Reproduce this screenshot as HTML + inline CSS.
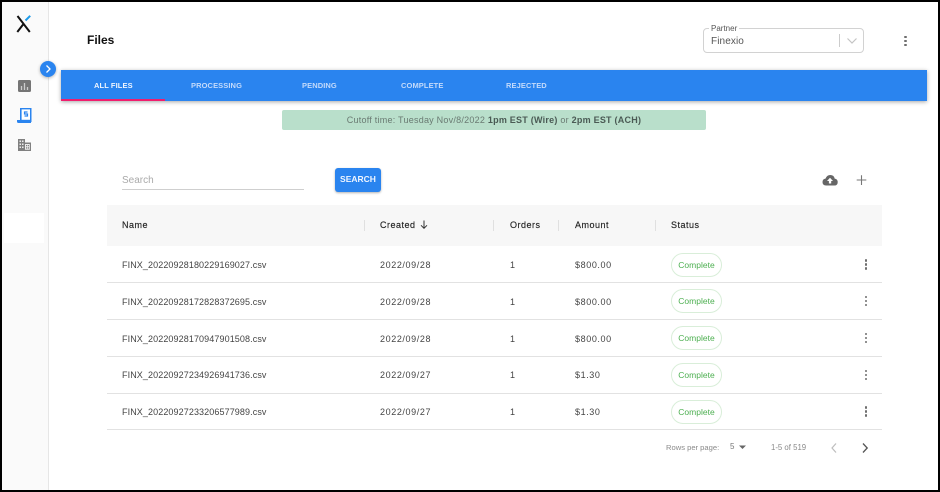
<!DOCTYPE html>
<html><head><meta charset="utf-8">
<style>
*{box-sizing:border-box;margin:0;padding:0}
html,body{width:940px;height:492px;overflow:hidden;background:#000}
body{position:relative;font-family:"Liberation Sans",sans-serif}
#page{position:absolute;left:2px;top:2px;width:935.500px;height:488px;background:#fff;overflow:hidden}
.a{position:absolute;white-space:nowrap}
#root{position:absolute;left:2px;top:2px;width:935.500px;height:488px;overflow:hidden}
#in{position:absolute;left:-2px;top:-2px;width:940px;height:492px;filter:blur(.3px)}
.tab{position:absolute;top:81px;font-size:7.500px;line-height:10px;font-weight:700;color:#c3dafb;letter-spacing:.1px}
.th{position:absolute;top:220px;font-size:9px;line-height:11px;color:#222;letter-spacing:.5px;-webkit-text-stroke:.15px #222}
.td{position:absolute;font-size:9px;line-height:11px;color:#444;letter-spacing:.1px}
.w{letter-spacing:.6px}
.sep{position:absolute;top:220px;width:1px;height:11px;background:#e0e0e0}
.line{position:absolute;left:107px;width:775px;height:1px;background:#e2e2e2}
.chip{position:absolute;left:671px;width:51px;height:24px;border:1px solid #d9eed9;border-radius:12px;font-size:8.500px;line-height:22px;text-align:center;color:#4caf50;background:#fff}
.dots{position:absolute;left:864.500px;width:3px}
.dots i{display:block;width:2.600px;height:2.600px;border-radius:50%;background:#6e6e6e;margin-bottom:1.600px}
</style></head><body>
<div id="page"></div>
<div id="root"><div id="in">
<!-- sidebar -->
<div class="a" style="left:2px;top:2px;width:47px;height:488px;background:#fafafa;border-right:1px solid #e6e6e6"></div>
<div class="a" style="left:4px;top:213px;width:40px;height:30px;background:#fff"></div>
<svg class="a" style="left:16px;top:14px" width="16" height="19" viewBox="0 0 16 19"><path d="M1.500 2 L13.800 18 M1.300 18 L7 10.600" stroke="#111" stroke-width="2" fill="none"/><path d="M9.500 6.500 L14.200 1.800" stroke="#1e9be8" stroke-width="2" fill="none"/></svg>
<svg class="a" style="left:18px;top:80px" width="13" height="12" viewBox="0 0 13 12"><rect width="13" height="12" rx="1.500" fill="#757575"/><path d="M3.500 10V6M6.500 10V3M9.500 10V7" stroke="#ccc" stroke-width="1.300"/></svg>
<svg class="a" style="left:17px;top:107px" width="15" height="16" viewBox="0 0 15 16"><path d="M3 1h11.500v14H3z" fill="#2a84ef"/><rect x="4.600" y="2.400" width="8.400" height="10.400" fill="#fff"/><path d="M0 13h11v1.500h3V16H1.500Q0 16 0 14.500z" fill="#2a84ef"/><path d="M10.500 5H7.500v2h3v2H7.500" stroke="#2a84ef" stroke-width="1.200" fill="none"/></svg>
<svg class="a" style="left:18px;top:139px" width="13" height="12" viewBox="0 0 13 12"><path d="M0 0h7v3.500h6V12H0z" fill="#808080"/><path d="M1.500 1.500h1.500v1.500h-1.500zM4 1.500h1.500v1.500H4zM1.500 4.500h1.500v1.500h-1.500zM4 4.500h1.500v1.500H4zM1.500 7.500h1.500v1.500h-1.500zM4 7.500h1.500v1.500H4zM7 5h4.800v5.800H7z" fill="#eee"/><path d="M8 6h1.300v1.300H8zM10 6h1v1.300h-1zM8 8.300h1.300v1.300H8zM10 8.300h1v1.300h-1z" fill="#808080"/></svg>
<div class="a" style="left:40px;top:61px;width:16px;height:16px;border-radius:50%;background:#2a84ef;box-shadow:0 1px 3px rgba(0,0,0,.3)"></div>
<svg class="a" style="left:40px;top:61px" width="16" height="16" viewBox="0 0 16 16"><path d="M6.500 4.500L10 8L6.500 11.500" stroke="#fff" stroke-width="1.300" fill="none"/></svg>

<!-- header -->
<div class="a" style="left:87px;top:33px;font-size:12px;line-height:14px;font-weight:700;color:#111">Files</div>
<div class="a" style="left:703px;top:28px;width:161px;height:25px;border:1px solid #d2d2d2;border-radius:4px"></div>
<div class="a" style="left:709px;top:24px;background:#fff;padding:0 2px;font-size:8px;line-height:9px;color:#555">Partner</div>
<div class="a" style="left:711px;top:35.500px;font-size:10px;line-height:12px;color:#555;letter-spacing:.1px">Finexio</div>
<div class="a" style="left:839px;top:34px;width:1px;height:13px;background:#ccc"></div>
<svg class="a" style="left:846px;top:37px" width="12" height="8" viewBox="0 0 12 8"><path d="M1.500 1.500L6 6L10.500 1.500" stroke="#c4c4c4" stroke-width="1.200" fill="none"/></svg>
<div class="dots" style="left:904px;top:35.500px"><i></i><i></i><i></i></div>

<!-- tab bar -->
<div class="a" style="left:61px;top:70px;width:866px;height:31px;background:#2a84ef;box-shadow:0 1px 4px rgba(0,0,0,.35)"></div>
<div class="a" style="left:61px;top:99px;width:104px;height:2px;background:#f01e6e"></div>
<div class="tab" style="left:94px;color:#eef4fe">ALL FILES</div>
<div class="tab" style="left:191px">PROCESSING</div>
<div class="tab" style="left:302px">PENDING</div>
<div class="tab" style="left:401px">COMPLETE</div>
<div class="tab" style="left:506px">REJECTED</div>

<!-- cutoff -->
<div class="a" style="left:282px;top:110px;width:424px;height:20px;background:#b9dfcb;border-radius:2px;text-align:center;font-size:9px;line-height:20px;color:#6a7a72;letter-spacing:.24px">Cutoff time: Tuesday Nov/8/2022 <b style="color:#4a5a54">1pm EST (Wire)</b> or <b style="color:#4a5a54">2pm EST (ACH)</b></div>

<!-- toolbar -->
<div class="a" style="left:122px;top:173.500px;font-size:10px;line-height:13px;color:#aaa">Search</div>
<div class="a" style="left:122px;top:189px;width:182px;height:1px;background:#cfcfcf"></div>
<div class="a" style="left:335px;top:168px;width:46px;height:24px;background:#2a84ef;border-radius:3px;box-shadow:0 1px 2px rgba(0,0,0,.3);color:#eef5ff;font-size:8.500px;line-height:23px;font-weight:700;text-align:center">SEARCH</div>
<svg class="a" style="left:822px;top:174px" width="16" height="12" viewBox="0 0 16 12"><path d="M4 11.500Q.5 11.500 .5 8Q.5 5 3.500 4.600Q5 1 8.200 1Q12 1 12.700 4.600Q15.700 5 15.700 8.200Q15.700 11.500 12.500 11.500z" fill="#666"/><path d="M8 3.800L11 7H9.200v2.500H6.900V7H5z" fill="#fff"/></svg>
<svg class="a" style="left:856px;top:174px" width="11" height="12" viewBox="0 0 11 12"><path d="M5.500 1.200V11M.7 6h9.600" stroke="#777" stroke-width="1.100"/></svg>

<!-- table head -->
<div class="a" style="left:107px;top:205px;width:775px;height:41px;background:#f7f7f7"></div>
<div class="th" style="left:122px">Name</div>
<div class="sep" style="left:364px"></div>
<div class="th" style="left:380px">Created</div>
<svg class="a" style="left:419px;top:219px" width="10" height="11" viewBox="0 0 10 11"><path d="M5 1.500V9M2 6.300L5 9.300L8 6.300" stroke="#333" stroke-width="1" fill="none"/></svg>
<div class="sep" style="left:493px"></div>
<div class="th" style="left:510px">Orders</div>
<div class="sep" style="left:558px"></div>
<div class="th" style="left:575px">Amount</div>
<div class="sep" style="left:655px"></div>
<div class="th" style="left:671px">Status</div>

<!-- rows -->
<div class="td" style="left:122px;top:260px">FINX_20220928180229169027.csv</div>
<div class="td w" style="left:380px;top:260px">2022/09/28</div>
<div class="td" style="left:510px;top:260px">1</div>
<div class="td w" style="left:575px;top:260px">$800.00</div>
<div class="chip" style="top:252.500px">Complete</div>
<div class="dots" style="top:259px"><i></i><i></i><i></i></div>
<div class="line" style="top:282px"></div>

<div class="td" style="left:122px;top:296.500px">FINX_20220928172828372695.csv</div>
<div class="td w" style="left:380px;top:296.500px">2022/09/28</div>
<div class="td" style="left:510px;top:296.500px">1</div>
<div class="td w" style="left:575px;top:296.500px">$800.00</div>
<div class="chip" style="top:289px">Complete</div>
<div class="dots" style="top:295.500px"><i></i><i></i><i></i></div>
<div class="line" style="top:319px"></div>

<div class="td" style="left:122px;top:333.500px">FINX_20220928170947901508.csv</div>
<div class="td w" style="left:380px;top:333.500px">2022/09/28</div>
<div class="td" style="left:510px;top:333.500px">1</div>
<div class="td w" style="left:575px;top:333.500px">$800.00</div>
<div class="chip" style="top:326px">Complete</div>
<div class="dots" style="top:332.500px"><i></i><i></i><i></i></div>
<div class="line" style="top:356px"></div>

<div class="td" style="left:122px;top:370px">FINX_20220927234926941736.csv</div>
<div class="td w" style="left:380px;top:370px">2022/09/27</div>
<div class="td" style="left:510px;top:370px">1</div>
<div class="td w" style="left:575px;top:370px">$1.30</div>
<div class="chip" style="top:363px">Complete</div>
<div class="dots" style="top:369.500px"><i></i><i></i><i></i></div>
<div class="line" style="top:393px"></div>

<div class="td" style="left:122px;top:407px">FINX_20220927233206577989.csv</div>
<div class="td w" style="left:380px;top:407px">2022/09/27</div>
<div class="td" style="left:510px;top:407px">1</div>
<div class="td w" style="left:575px;top:407px">$1.30</div>
<div class="chip" style="top:400px">Complete</div>
<div class="dots" style="top:406px"><i></i><i></i><i></i></div>
<div class="line" style="top:429px"></div>

<!-- pagination -->
<div class="a" style="left:666px;top:443px;font-size:7.600px;line-height:10px;color:#8a8a8a">Rows per page:</div>
<div class="a" style="left:730px;top:442px;font-size:8px;line-height:10px;color:#777">5</div>
<svg class="a" style="left:738px;top:445px" width="9" height="5" viewBox="0 0 9 5"><path d="M1 .5H8L4.500 4z" fill="#666"/></svg>
<div class="a" style="left:771px;top:443px;font-size:7.800px;line-height:10px;color:#8a8a8a">1-5 of 519</div>
<svg class="a" style="left:829px;top:442px" width="10" height="12" viewBox="0 0 10 12"><path d="M7 1.500L3 6L7 10.500" stroke="#bdbdbd" stroke-width="1.200" fill="none"/></svg>
<svg class="a" style="left:860px;top:442px" width="10" height="12" viewBox="0 0 10 12"><path d="M3 1.500L7.200 6L3 10.500" stroke="#555" stroke-width="1.300" fill="none"/></svg>
</div></div>
</body></html>
